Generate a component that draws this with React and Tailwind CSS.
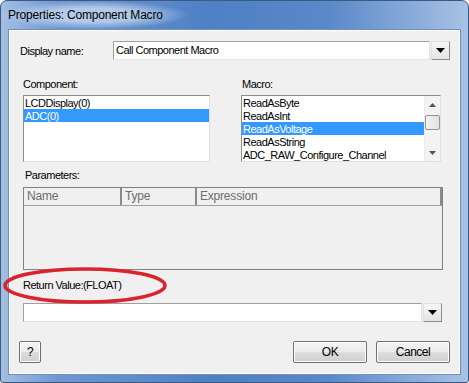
import React from "react";

const font = { fontFamily: '"Liberation Sans", Arial, sans-serif' };

function DropButton() {
    return (
        <div className="w-[19px] h-[19px] ml-[1px] border border-[#8c8c8c] border-t-[#e0e0e0] border-l-[#e0e0e0] bg-[linear-gradient(#f6f6f6,#e4e4e4)] flex items-center justify-center">
            <svg width="9" height="5" viewBox="0 0 9 5">
                <path d="M0 0h9L4.5 5z" fill="#000" />
            </svg>
        </div>
    );
}

function ListItem({ text, selected }) {
    return (
        <div
            className={`h-[13px] leading-[14px] pl-[1px] whitespace-nowrap ${
                selected ? "bg-[#3399ff] text-white" : "text-black"
            }`}
        >
            {text}
        </div>
    );
}

function Button({ children, className }) {
    return (
        <button
            className={`h-[22px] border border-[#707070] rounded-[2px] bg-[linear-gradient(#f4f4f4_0%,#ebebeb_50%,#dddddd_51%,#cfcfcf_100%)] text-[12px] text-black shadow-[inset_0_0_0_1px_#fcfcfc] ${className}`}
        >
            {children}
        </button>
    );
}

export default function App() {
    return (
        <div className="relative w-[469px] h-[383px] bg-white text-[11px] tracking-[-0.5px]" style={font}>
            <div className="w-[469px] h-[383px] rounded-t-[7px] rounded-b-[3px] border border-[#3a5a82] bg-[linear-gradient(90deg,#a4bfe3_0%,#6f97d0_12%,#4f80c5_45%,#5a88c9_70%,#a8c2e4_100%)] flex flex-col">
                {/* title bar */}
                <div className="h-[28px] flex items-center pl-[7px]">
                    <span className="text-[12px] tracking-[-0.2px] text-black rounded-full bg-[radial-gradient(ellipse_at_center,rgba(210,225,244,0.7)_35%,rgba(210,225,244,0)_72%)] py-[5px] -ml-[6px] pl-[6px] pr-[24px]">
                        Properties: Component Macro
                    </span>
                </div>

                {/* client area */}
                <div className="flex-1 mx-[7px] mb-[7px] border border-[#6f8fbd] bg-[#f0f0f0] shadow-[inset_0_0_0_1px_#ffffff]">
                    {/* display name */}
                    <div className="mt-[11px] ml-[11px] flex items-center h-[19px]">
                        <div className="w-[93px] pt-[1px]">Display name:</div>
                        <div className="w-[317px] h-[19px] border border-[#a0a0a0] border-b-[#e3e3e3] border-r-[#e3e3e3] bg-white pl-[2px] leading-[17px]">
                            Call Component Macro
                        </div>
                        <DropButton />
                    </div>

                    {/* component / macro */}
                    <div className="mt-[18px] ml-[14px] flex">
                        <div className="w-[187px]">
                            <div className="h-[13px] leading-[13px]">Component:</div>
                            <div className="mt-[4px] h-[67px] border border-[#8c8c8c] border-b-[#e0e0e0] border-r-[#e0e0e0] bg-white overflow-hidden">
                                <ListItem text="LCDDisplay(0)" />
                                <ListItem text="ADC(0)" selected />
                            </div>
                        </div>
                        <div className="w-[200px] ml-[31px]">
                            <div className="h-[13px] leading-[13px] pl-[1px]">Macro:</div>
                            <div className="mt-[4px] h-[67px] border border-[#8c8c8c] border-b-[#e0e0e0] border-r-[#e0e0e0] bg-white flex overflow-hidden">
                                <div className="flex-1 overflow-hidden">
                                    <ListItem text="ReadAsByte" />
                                    <ListItem text="ReadAsInt" />
                                    <ListItem text="ReadAsVoltage" selected />
                                    <ListItem text="ReadAsString" />
                                    <ListItem text="ADC_RAW_Configure_Channel" />
                                </div>
                                <div className="w-[16px] bg-[#f3f3f3] border-l border-[#ececec] flex flex-col items-center">
                                    <div className="h-[17px] flex items-center justify-center">
                                        <svg width="7" height="4" viewBox="0 0 7 4">
                                            <path d="M0 4L3.5 0L7 4z" fill="#555" />
                                        </svg>
                                    </div>
                                    <div className="mt-[2px] w-[15px] h-[15px] rounded-[2px] border border-[#959595] bg-[linear-gradient(90deg,#f2f2f2,#e2e2e2)]" />
                                    <div className="flex-1" />
                                    <div className="h-[17px] flex items-center justify-center">
                                        <svg width="7" height="4" viewBox="0 0 7 4">
                                            <path d="M0 0h7L3.5 4z" fill="#555" />
                                        </svg>
                                    </div>
                                </div>
                            </div>
                        </div>
                    </div>

                    {/* parameters */}
                    <div className="mt-[7px] ml-[16px] h-[13px] leading-[13px]">Parameters:</div>
                    <div className="mt-[5px] ml-[14px] w-[420px] h-[83px] border border-[#828282] bg-[#f0f0f0]">
                        <div className="flex h-[18px] border-b border-[#a0a0a0] text-[#6d6d6d] text-[12px] leading-[17px] tracking-[-0.2px]">
                            <div className="w-[98px] pl-[3px] border-r-2 border-[#8a8a8a]">Name</div>
                            <div className="w-[75px] pl-[3px] border-r-2 border-[#8a8a8a]">Type</div>
                            <div className="flex-1 pl-[3px] border-r-2 border-[#8a8a8a]">Expression</div>
                        </div>
                    </div>

                    {/* return value */}
                    <div className="mt-[9px] ml-[14px] h-[13px] leading-[13px]">Return Value:(FLOAT)</div>
                    <div className="mt-[11px] ml-[14px] flex h-[19px]">
                        <div className="w-[399px] h-[19px] border border-[#a0a0a0] border-b-[#e3e3e3] border-r-[#e3e3e3] bg-white" />
                        <DropButton />
                    </div>

                    {/* buttons */}
                    <div className="mt-[19px] ml-[10px] flex">
                        <Button className="w-[22px]">?</Button>
                        <Button className="w-[74px] ml-[252px]">OK</Button>
                        <Button className="w-[74px] ml-[9px]">Cancel</Button>
                    </div>
                </div>
            </div>

            {/* red annotation ellipse */}
            <svg className="absolute left-0 top-[266px]" width="172" height="40" viewBox="0 0 172 40">
                <ellipse cx="85" cy="19.5" rx="80" ry="16.5" fill="none" stroke="#d9232d" strokeWidth="3.5" />
            </svg>
        </div>
    );
}
